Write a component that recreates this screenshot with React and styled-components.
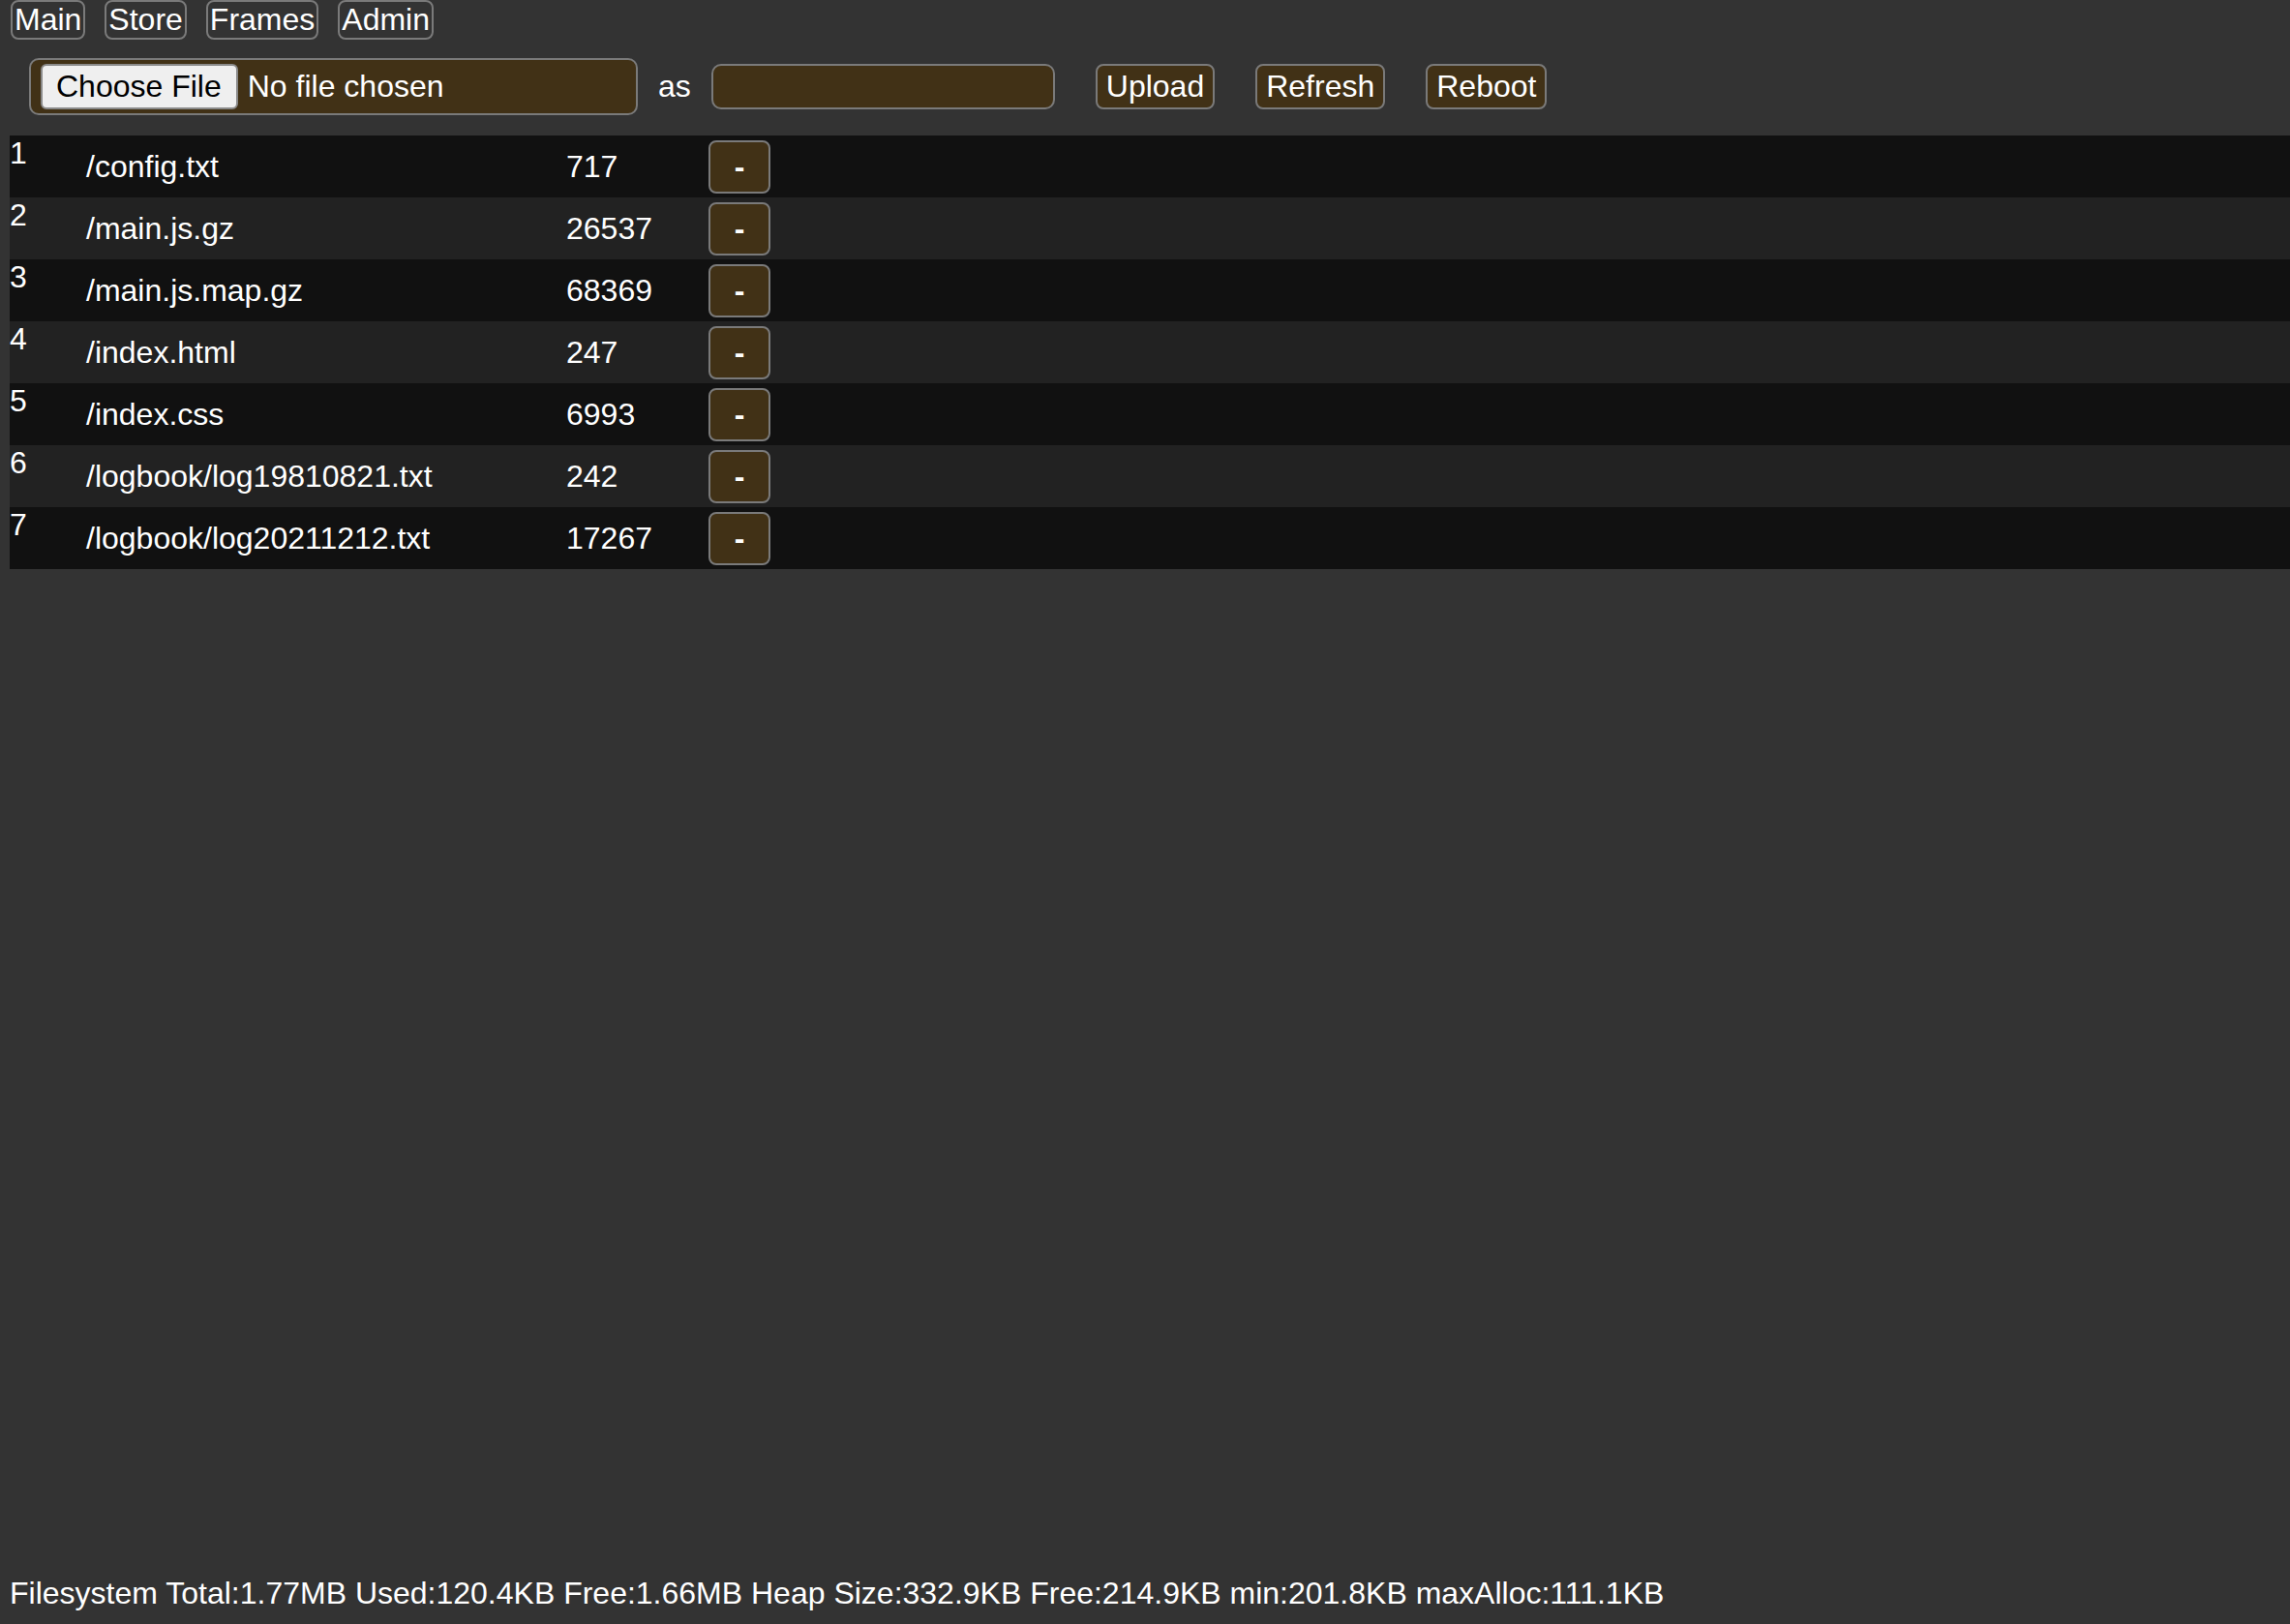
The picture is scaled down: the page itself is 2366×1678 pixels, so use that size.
import React from 'react';
import styled, { createGlobalStyle, css } from 'styled-components';

const GlobalStyle = createGlobalStyle`
    html, body {
        margin: 0;
        padding: 0;
        background: #333333;
        color: #ffffff;
        font-family: "Liberation Sans", Arial, Helvetica, sans-serif;
        font-size: 32px;
    }
`;

const brown = '#413116';
const edge = '#7a7a7a';

const Page = styled.div`
    min-height: 100vh;
    display: flex;
    flex-direction: column;
    box-sizing: border-box;
`;

const NavBar = styled.nav`
    display: flex;
    gap: 20px;
    padding-left: 11px;
`;

const NavButton = styled.button`
    font: inherit;
    color: #fff;
    background: transparent;
    border: 2px solid ${edge};
    border-radius: 8px;
    padding: 0 2px;
    line-height: 37px;
    cursor: pointer;
`;

const UploadBar = styled.div`
    display: flex;
    align-items: center;
    margin-top: 19px;
    padding-left: 30px;
`;

const FilePicker = styled.label`
    display: flex;
    align-items: center;
    box-sizing: border-box;
    width: 629px;
    height: 59px;
    padding: 4px 10px;
    background: ${brown};
    border: 2px solid ${edge};
    border-radius: 10px;
    cursor: pointer;
    input {
        display: none;
    }
`;

const ChooseButton = styled.span`
    background: #efefef;
    color: #000;
    border: 2px solid #8a8a8a;
    border-radius: 6px;
    padding: 3px 15px 3px 14px;
    line-height: 37px;
    margin-right: 10px;
`;

const AsLabel = styled.span`
    margin: 0 21px;
    line-height: 37px;
`;

const NameInput = styled.input`
    box-sizing: border-box;
    width: 355px;
    height: 47px;
    font: inherit;
    color: #fff;
    background: ${brown};
    border: 2px solid ${edge};
    border-radius: 10px;
    padding: 0 8px;
    outline: none;
`;

const brownButton = css`
    font: inherit;
    color: #fff;
    background: ${brown};
    border: 2px solid ${edge};
    border-radius: 8px;
    line-height: 37px;
    cursor: pointer;
`;

const ActionButton = styled.button`
    ${brownButton}
    margin-left: 42px;
    padding: 3px 9px;
`;

const FileTable = styled.div`
    margin: 21px 0 0 10px;
`;

const FileRow = styled.div`
    display: grid;
    grid-template-columns: 79px 496px 147px 64px;
    align-items: center;
    height: 64px;
    background: ${p => (p.$odd ? '#111111' : '#222222')};
    line-height: 37px;
`;

const Index = styled.span`
    align-self: start;
`;

const DeleteButton = styled.button`
    ${brownButton}
    box-sizing: border-box;
    width: 64px;
    height: 55px;
    padding: 0;
    font-weight: bold;
`;

const Footer = styled.footer`
    margin-top: auto;
    padding: 0 0 13px 10px;
    line-height: 37px;
`;

const files = [
    ['/config.txt', 717],
    ['/main.js.gz', 26537],
    ['/main.js.map.gz', 68369],
    ['/index.html', 247],
    ['/index.css', 6993],
    ['/logbook/log19810821.txt', 242],
    ['/logbook/log20211212.txt', 17267],
];

const App = () => {
    return (
        <Page>
            <GlobalStyle />
            <NavBar>
                {['Main', 'Store', 'Frames', 'Admin'].map(n => (
                    <NavButton key={n}>{n}</NavButton>
                ))}
            </NavBar>
            <UploadBar>
                <FilePicker>
                    <input type='file' />
                    <ChooseButton>Choose File</ChooseButton>
                    <span>No file chosen</span>
                </FilePicker>
                <AsLabel>as</AsLabel>
                <NameInput type='text' />
                <ActionButton>Upload</ActionButton>
                <ActionButton>Refresh</ActionButton>
                <ActionButton>Reboot</ActionButton>
            </UploadBar>
            <FileTable>
                {files.map(([name, size], i) => (
                    <FileRow key={name} $odd={i % 2 === 0}>
                        <Index>{i + 1}</Index>
                        <span>{name}</span>
                        <span>{size}</span>
                        <DeleteButton>-</DeleteButton>
                    </FileRow>
                ))}
            </FileTable>
            <Footer>
                Filesystem Total:1.77MB Used:120.4KB Free:1.66MB Heap Size:332.9KB Free:214.9KB min:201.8KB maxAlloc:111.1KB
            </Footer>
        </Page>
    );
};

export default App;
